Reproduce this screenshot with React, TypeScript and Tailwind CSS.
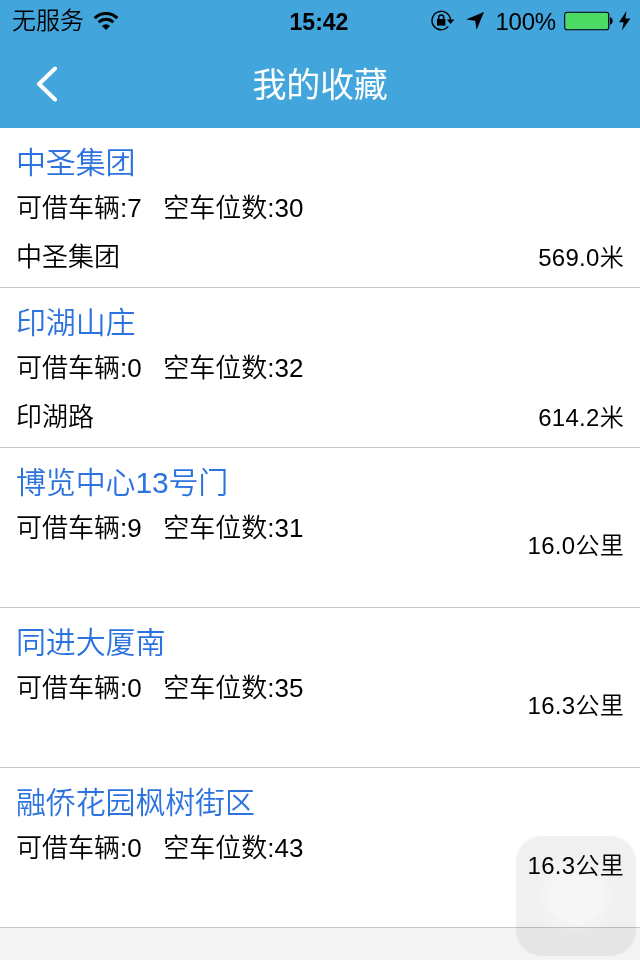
import React from 'react';

interface Station {
    name: string;
    bikes: number;
    spaces: number;
    address?: string;
    distance: string;
}

const stations: Station[] = [
    { name: '中圣集团', bikes: 7, spaces: 30, address: '中圣集团', distance: '569.0米' },
    { name: '印湖山庄', bikes: 0, spaces: 32, address: '印湖路', distance: '614.2米' },
    { name: '博览中心13号门', bikes: 9, spaces: 31, distance: '16.0公里' },
    { name: '同进大厦南', bikes: 0, spaces: 35, distance: '16.3公里' },
    { name: '融侨花园枫树街区', bikes: 0, spaces: 43, distance: '16.3公里' },
];

const WifiIcon = () => (
    <svg width="26" height="20" viewBox="0 0 26 20" fill="none" stroke="#000" strokeWidth="3">
        <path d="M1.6 7.1a16.2 16.2 0 0 1 22.8 0" />
        <path d="M5.7 11.2a10.4 10.4 0 0 1 14.6 0" />
        <path d="M13 19l-4-4a5.7 5.7 0 0 1 8 0z" fill="#000" stroke="none" />
    </svg>
);

const RotationLockIcon = () => (
    <svg width="24" height="22" viewBox="0 0 24 22" fill="none" stroke="#000">
        <path d="M17.3 16.4A9.2 9.2 0 1 1 19.4 10" strokeWidth="1.4" />
        <path d="M15.8 9.6h7.6l-3.8 4.4z" fill="#000" stroke="none" />
        <rect x="6" y="9" width="8.4" height="6.6" fill="#000" stroke="none" />
        <path d="M7.7 9.6V7.4a2.5 2.5 0 0 1 5 0v2.2" strokeWidth="1.5" />
    </svg>
);

const StatusBar = () => (
    <div className="grid grid-cols-3 h-10 items-center text-black text-[24px] leading-10">
        <div className="flex items-center pl-3">
            <span className="font-[350]">无服务</span>
            <span className="ml-[9px]"><WifiIcon /></span>
        </div>
        <div className="text-center font-bold text-[23px] pt-0.5 pr-0.5">15:42</div>
        <div className="flex items-center justify-end pr-[9px]">
            <RotationLockIcon />
            <svg className="ml-[11px]" width="18" height="18" viewBox="0 0 18 18">
                <path d="M18 0L10.5 18L9.2 8.8L0 7.5z" fill="#000" />
            </svg>
            <span className="ml-[11px] pt-0.5 tracking-[-0.2px]">100%</span>
            <svg className="ml-2" width="50" height="20" viewBox="0 0 50 20">
                <rect x="0.75" y="1.25" width="44" height="17.5" rx="2.5" fill="none" stroke="#000" strokeWidth="1.2" />
                <rect x="1.5" y="2" width="42.5" height="16" rx="1.5" fill="#4cd964" />
                <path d="M46 6.3c3.6.8 3.6 6.6 0 7.4z" fill="#000" />
            </svg>
            <svg className="ml-[5px]" width="12" height="20" viewBox="0 0 12 20">
                <path d="M7.5 0L0 11.3h4.6L3 19.5L11.4 7.6H6.4z" fill="#000" />
            </svg>
        </div>
    </div>
);

const StationRow = ({ station }: { station: Station }) => (
    <li className="h-40 flex justify-between px-4 bg-white border-b border-[#c8c8c8]">
        <div className="pt-3">
            <h2 className="text-[30px] leading-[46px] font-[350] tracking-[-0.15px] text-[#2c73df]">{station.name}</h2>
            <p className="text-[26px] leading-[45px] font-[350] whitespace-pre">
                {`可借车辆:${station.bikes}   空车位数:${station.spaces}`}
            </p>
            {station.address && <p className="text-[26px] leading-[52px] font-[350]">{station.address}</p>}
        </div>
        <span className={`text-[24px] leading-8 font-[350] tracking-[0.3px] ${station.address ? 'pt-[114px]' : 'pt-[82px]'}`}>
            {station.distance}
        </span>
    </li>
);

const App = () => {
    return (
        <div className="relative w-[640px] h-[960px] overflow-hidden bg-[#f4f4f4] text-black font-['Liberation_Sans','Noto_Sans_CJK_SC',sans-serif]">
            <header className="h-32 bg-[#42a5dc]">
                <StatusBar />
                <div className="grid grid-cols-3 h-[88px] items-center">
                    <button type="button" aria-label="返回" className="pl-9">
                        <svg width="22" height="36" viewBox="0 0 22 36" fill="none" stroke="#fff" strokeWidth="4" strokeLinecap="round" strokeLinejoin="round">
                            <path d="M19 2.5L3 18L19 33.5" />
                        </svg>
                    </button>
                    <h1 className="text-center text-[34px] leading-[50px] pt-0.5 tracking-[-0.3px] text-white">我的收藏</h1>
                </div>
            </header>

            <ul>
                {stations.map((station) => (
                    <StationRow key={station.name} station={station} />
                ))}
            </ul>

            {/* AssistiveTouch */}
            <div className="absolute left-[516px] top-[836px] size-[120px] rounded-[26px] bg-[#f0f0f0] mix-blend-multiply flex items-center justify-center">
                <div className="size-[88px] rounded-full bg-[#f1f1f1] flex items-center justify-center">
                    <div className="size-[72px] rounded-full bg-[#f3f3f3] flex items-center justify-center">
                        <div className="size-[57px] rounded-full bg-[#f6f6f6]" />
                    </div>
                </div>
            </div>
        </div>
    );
};

export default App;
